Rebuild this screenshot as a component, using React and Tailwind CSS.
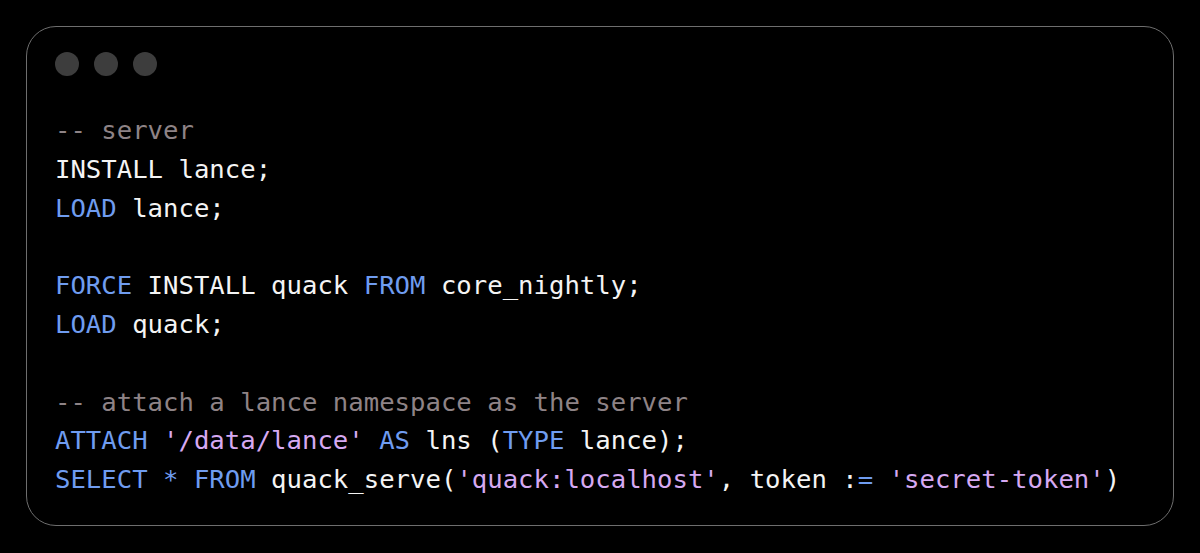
const K = ({ children }) => <span className="text-[#6f9cf0]">{children}</span>;
const S = ({ children }) => <span className="text-[#d6a9f2]">{children}</span>;
const C = ({ children }) => <span className="text-[#8e8386]">{children}</span>;

const lines = [
  <C>-- server</C>,
  <>INSTALL lance;</>,
  <><K>LOAD</K> lance;</>,
  null,
  <><K>FORCE</K> INSTALL quack <K>FROM</K> core_nightly;</>,
  <><K>LOAD</K> quack;</>,
  null,
  <C>-- attach a lance namespace as the server</C>,
  <><K>ATTACH</K> <S>'/data/lance'</S> <K>AS</K> lns (<K>TYPE</K> lance);</>,
  <><K>SELECT</K> <K>*</K> <K>FROM</K> quack_serve(<S>'quack:localhost'</S>, token :<K>=</K> <S>'secret-token'</S>)</>,
];

export default function App() {
  return (
    <div className="w-[1200px] h-[553px] bg-black pt-[26px] px-[26px]">
      <div className="h-[500px] rounded-[30px] border-[1.5px] border-[#6e6e6e] bg-black pl-[28px] pt-[25px]">
        <div className="flex gap-[15px]">
          <div className="w-6 h-6 rounded-full bg-[#3d3d3d]" />
          <div className="w-6 h-6 rounded-full bg-[#3d3d3d]" />
          <div className="w-6 h-6 rounded-full bg-[#3d3d3d]" />
        </div>
        <pre className="mt-[35px] font-['DejaVu_Sans_Mono',monospace] text-[25.65px] leading-[38.8px] text-[#f4f4f4] whitespace-pre">
          {lines.map((l, i) => (
            <div key={i} className="h-[38.8px]">{l ?? " "}</div>
          ))}
        </pre>
      </div>
    </div>
  );
}
